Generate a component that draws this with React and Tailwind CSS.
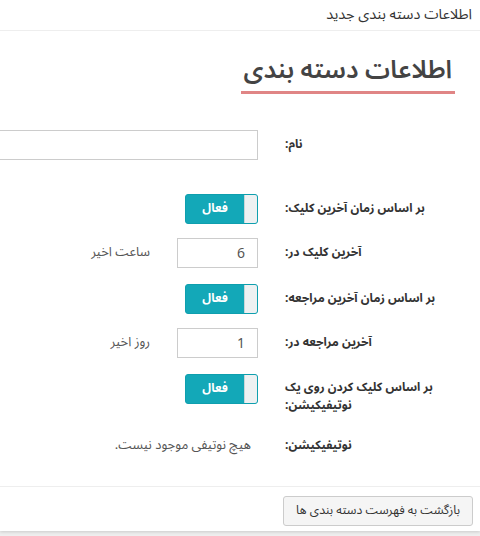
import React from "react";

const Toggle = () => {
  return (
    <div className="flex h-[30px] w-[73px] items-stretch overflow-hidden rounded-[3px] border border-[#0f9fae] bg-[#13a8b8]">
      <div className="w-[13px] border-l border-[#c9d6d8] bg-[#eef1f2]"></div>
      <div className="flex flex-1 items-center justify-center text-[12px] font-bold text-white">
        فعال
      </div>
    </div>
  );
};

const Label = ({ children, className = "" }) => (
  <div
    className={`w-[175px] shrink-0 whitespace-nowrap text-left text-[12px] font-bold leading-[18px] text-[#333] ${className}`}
  >
    {children}
  </div>
);

export default function App() {
  return (
    <div
      dir="rtl"
      className="h-[536px] w-[480px] overflow-hidden bg-[#eeeeee] font-['Noto_Sans_Arabic','Noto_Sans',sans-serif] text-[#333]"
    >
      <div className="h-[531px] bg-white shadow-[0_1px_3px_rgba(0,0,0,0.15)]">
        <div className="flex h-[31px] items-center border-b border-[#eeeeee] pr-2 text-[14.5px] text-[#333]">
          اطلاعات دسته بندی جدید
        </div>

        <div className="flex pr-[25px] pt-[22px]">
          <h1 className="border-b-[3px] border-[#e08585] px-[3px] pb-[4px] text-[25px] font-semibold leading-[34px] text-[#444]">
            اطلاعات دسته بندی
          </h1>
        </div>

        <div className="mt-[36px] flex flex-col pr-[20px]">
          <div className="flex items-center gap-[27px]">
            <Label>نام:</Label>
            <input
              type="text"
              className="h-[30px] w-[300px] shrink-0 border border-[#ccc] bg-white px-3 text-[13px] outline-none"
            />
          </div>

          <div className="mt-[34px] flex items-center gap-[27px]">
            <Label>بر اساس زمان آخرین کلیک:</Label>
            <Toggle />
          </div>

          <div className="mt-[14px] flex items-center gap-[27px]">
            <Label>آخرین کلیک در:</Label>
            <div className="flex items-center gap-[27px]">
              <input
                type="text"
                defaultValue="6"
                className="h-[30px] w-[81px] border border-[#ccc] bg-white px-3 text-[14px] text-[#555] outline-none"
              />
              <span className="text-[13px] text-[#555]">ساعت اخیر</span>
            </div>
          </div>

          <div className="mt-[16px] flex items-center gap-[27px]">
            <Label>بر اساس زمان آخرین مراجعه:</Label>
            <Toggle />
          </div>

          <div className="mt-[14px] flex items-center gap-[27px]">
            <Label>آخرین مراجعه در:</Label>
            <div className="flex items-center gap-[27px]">
              <input
                type="text"
                defaultValue="1"
                className="h-[30px] w-[81px] border border-[#ccc] bg-white px-3 text-[14px] text-[#555] outline-none"
              />
              <span className="text-[13px] text-[#555]">روز اخیر</span>
            </div>
          </div>

          <div className="mt-[16px] flex items-start gap-[27px]">
            <Label className="pt-[5px]">
              بر اساس کلیک کردن روی یک
              <br />
              نوتیفیکیشن:
            </Label>
            <Toggle />
          </div>

          <div className="mt-[21px] flex items-center gap-[27px]">
            <Label>نوتیفیکیشن:</Label>
            <span className="pr-[7px] text-[13px] text-[#555]">
              هیچ نوتیفی موجود نیست.
            </span>
          </div>
        </div>

        <div className="mt-[30px] border-t border-[#eeeeee] pr-[7px] pt-[9px]">
          <button className="h-[30px] rounded-[3px] border border-[#ccc] bg-[#f5f5f5] px-3 text-[12.25px] text-[#333]">
            بازگشت به فهرست دسته بندی ها
          </button>
        </div>
      </div>
    </div>
  );
}
